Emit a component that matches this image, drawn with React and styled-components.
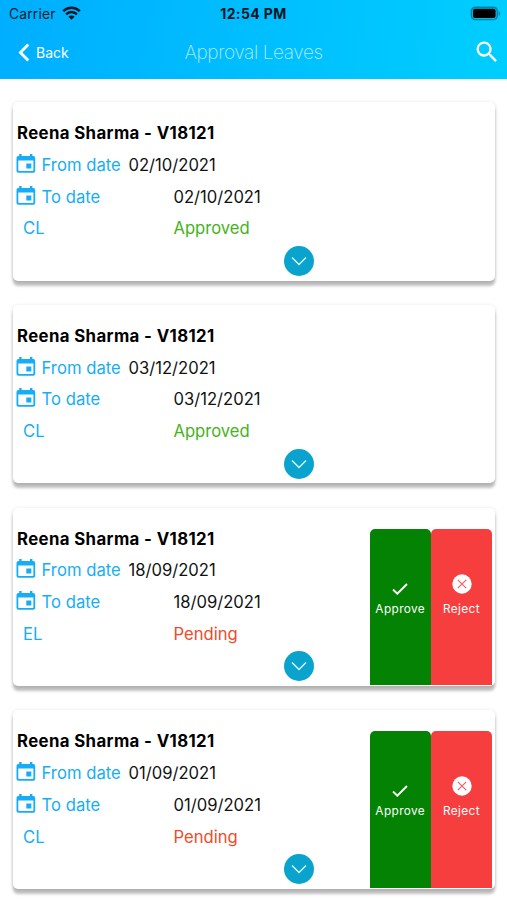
import React from 'react';
import styled, { createGlobalStyle } from 'styled-components';

const GlobalStyle = createGlobalStyle`
    * {
        box-sizing: border-box;
    }
    body {
        margin: 0;
        background: #ffffff;
        font-family: Inter, "Liberation Sans", sans-serif;
    }
`;

const Screen = styled.div`
    width: 507px;
    height: 900px;
    overflow: hidden;
    background: #ffffff;
`;

const Header = styled.header`
    height: 79px;
    background: linear-gradient(100deg, #00aeff 0%, #00ceff 100%);
`;

const StatusBar = styled.div`
    height: 27px;
    padding: 0 6px 0 9px;
    display: grid;
    grid-template-columns: 1fr auto 1fr;
    align-items: center;
    color: #06202c;
    font-size: 13.8px;
`;
const Carrier = styled.div`
    display: flex;
    align-items: center;
    gap: 6px;
    letter-spacing: 0.2px;
    svg {
        margin-top: -1px;
    }
`;
const Time = styled.div`
    color: #04161f;
    font-weight: 700;
    font-size: 14px;
    letter-spacing: 0.4px;
    margin-left: -3px;
`;
const BatterySlot = styled.div`
    display: flex;
    justify-content: flex-end;
`;

const NavBar = styled.nav`
    height: 50px;
    padding: 0 6px 0 18px;
    display: grid;
    grid-template-columns: 1fr auto 1fr;
    align-items: center;
    color: #ffffff;
`;
const BackButton = styled.div`
    display: flex;
    align-items: center;
    gap: 6px;
    font-size: 14px;
`;
const Title = styled.h1`
    margin: 0 0 0 -12px;
    color: rgba(255, 255, 255, 0.7);
    font-size: 19px;
    font-weight: 200;
    letter-spacing: -0.4px;
`;
const SearchButton = styled.div`
    display: flex;
    justify-content: flex-end;
`;

const List = styled.main`
    padding: 23px 12px 0 13px;
    display: grid;
    grid-gap: 24.3px;
`;

const Card = styled.section`
    height: 178.5px;
    padding: 15px 3px 0 4px;
    display: flex;
    justify-content: space-between;
    border-radius: 5px;
    background: #ffffff;
    box-shadow: 0 5px 3px rgba(0, 0, 0, 0.24), 0 1px 4px rgba(0, 0, 0, 0.15);
`;
const Details = styled.div`
    width: 298px;
`;
const Name = styled.h2`
    margin: 0;
    height: 32px;
    line-height: 32px;
    color: #000000;
    font-size: 16.8px;
    font-weight: 700;
    letter-spacing: 0.38px;
    white-space: nowrap;
`;
const Row = styled.div`
    height: 31.8px;
    display: grid;
    grid-template-columns: 24.5px ${props => props.valueColumn}px auto;
    align-items: center;
    font-size: 16.6px;
    white-space: nowrap;
`;
const TypeRow = styled(Row)`
    grid-template-columns: 6px 150.5px auto;
`;
const IconSlot = styled.span`
    display: flex;
    margin: -3px 0 0 -1px;
`;
const Label = styled.span`
    color: #16adf7;
    letter-spacing: 0.05px;
`;
const Value = styled.span`
    color: #111111;
`;
const Status = styled.span`
    color: ${props => (props.$pending ? '#f04a2a' : '#45b320')};
`;
const Toggle = styled.div`
    width: 30px;
    height: 30px;
    margin: 1.5px 0 0 267px;
    display: flex;
    align-items: center;
    justify-content: center;
    border-radius: 50%;
    background: #09a3cd;
`;

const Actions = styled.div`
    margin-top: 6px;
    height: 156.5px;
    display: grid;
    grid-template-columns: 61.5px 61px;
`;
const Action = styled.div`
    padding-top: 44px;
    display: flex;
    flex-direction: column;
    align-items: center;
    border-radius: 5px 5px 0 0;
    background: ${props => props.color};
    color: #ffffff;
    font-size: 11.8px;
    letter-spacing: 0.4px;
`;
const ActionIcon = styled.div`
    height: 22px;
    margin-bottom: 7px;
    padding-top: ${props => props.$drop || 0}px;
    display: flex;
    align-items: center;
`;

const WifiIcon = () => (
  <svg width="19" height="14" viewBox="0 0 19 14" fill="none" stroke="#04161f">
    <path d="M1.2 5.1a11.8 11.8 0 0 1 16.6 0" strokeWidth="2.6" />
    <path d="M4.1 8.3a7.5 7.5 0 0 1 10.8 0" strokeWidth="2.5" />
    <path d="M6.4 10.700a4.400 4.400 0 0 1 6.200 0L9.500 13.800z" fill="#04161f" stroke="none" />
  </svg>
);

const BatteryIcon = () => (
  <svg width="31" height="15" viewBox="0 0 31 15">
    <rect x="1.5" y="1.3" width="25.8" height="12.2" rx="3.8" fill="none" stroke="#0684a8" strokeWidth="1.7" />
    <rect x="3" y="2.8" width="22.6" height="9.2" rx="2" fill="#000000" />
    <path d="M28.700 5.200v4.400c.9-.4 1.500-1.200 1.500-2.200s-.6-1.800-1.500-2.200z" fill="#0684a8" />
  </svg>
);

const BackIcon = () => (
  <svg width="12" height="19" viewBox="0 0 12 19" fill="none" stroke="#ffffff" strokeWidth="2.8">
    <path d="M10.300 1.400L2.400 9.500l7.900 8.100" />
  </svg>
);

const SearchIcon = () => (
  <svg width="28" height="28" viewBox="0 0 24 24" fill="#ffffff">
    <path d="M15.500 14h-.79l-.28-.27A6.471 6.471 0 0 0 16 9.500 6.500 6.500 0 1 0 9.500 16c1.610 0 3.090-.59 4.230-1.570l.27.28v.79l5 4.990L20.490 19l-4.990-5zm-6 0C7.010 14 5 11.990 5 9.500S7.010 5 9.500 5 14 7.010 14 9.500 11.990 14 9.500 14z" />
  </svg>
);

const CalendarIcon = () => (
  <svg width="20" height="19" viewBox="0 0 20 19">
    <path d="M3.200 0h2.400v2H14V0h2.400v2h.8a2 2 0 0 1 2 2v12.700a2 2 0 0 1-2 2H2.500a2 2 0 0 1-2-2V4a2 2 0 0 1 2-2h.7z" fill="#16adf7" />
    <path d="M2.300 6.600h15.100v9.600a.8.8 0 0 1-.8.800H3.100a.8.8 0 0 1-.8-.8z" fill="#ffffff" />
    <rect x="10.300" y="9.500" width="5" height="5" fill="#16adf7" />
  </svg>
);

const ChevronIcon = () => (
  <svg width="16" height="10" viewBox="0 0 16 10" fill="none" stroke="#d9f6ff" strokeWidth="1.400">
    <path d="M1 1.500l7 7 7-7" />
  </svg>
);

const CheckIcon = () => (
  <svg width="16" height="12" viewBox="0 0 16 12" fill="none" stroke="#ffffff" strokeWidth="1.900">
    <path d="M1 6.500l4.300 4.200L15 1" />
  </svg>
);

const RejectIcon = () => (
  <svg width="20" height="20" viewBox="0 0 20 20">
    <circle cx="10" cy="10" r="9.700" fill="#ffffff" />
    <path d="M5.800 5.800l8.400 8.400M14.200 5.800l-8.400 8.400" stroke="#f06066" strokeWidth="1.200" />
  </svg>
);

const leaves = [
  { id: 1, date: '02/10/2021', type: 'CL', status: 'Approved' },
  { id: 2, date: '03/12/2021', type: 'CL', status: 'Approved' },
  { id: 3, date: '18/09/2021', type: 'EL', status: 'Pending' },
  { id: 4, date: '01/09/2021', type: 'CL', status: 'Pending' },
];

const LeaveCard = ({ leave }) => {
  const pending = leave.status === 'Pending';
  return (
    <Card>
      <Details>
        <Name>Reena Sharma - V18121</Name>
        <Row valueColumn={87}>
          <IconSlot><CalendarIcon /></IconSlot>
          <Label>From date</Label>
          <Value>{leave.date}</Value>
        </Row>
        <Row valueColumn={132}>
          <IconSlot><CalendarIcon /></IconSlot>
          <Label>To date</Label>
          <Value>{leave.date}</Value>
        </Row>
        <TypeRow>
          <span />
          <Label>{leave.type}</Label>
          <Status $pending={pending}>{leave.status}</Status>
        </TypeRow>
        <Toggle><ChevronIcon /></Toggle>
      </Details>
      {pending && (
        <Actions>
          <Action color="#048204">
            <ActionIcon $drop={10}><CheckIcon /></ActionIcon>
            Approve
          </Action>
          <Action color="#f73e3f">
            <ActionIcon><RejectIcon /></ActionIcon>
            Reject
          </Action>
        </Actions>
      )}
    </Card>
  );
};

const App = () => (
  <Screen>
    <GlobalStyle />
    <Header>
      <StatusBar>
        <Carrier>Carrier <WifiIcon /></Carrier>
        <Time>12:54 PM</Time>
        <BatterySlot><BatteryIcon /></BatterySlot>
      </StatusBar>
      <NavBar>
        <BackButton><BackIcon />Back</BackButton>
        <Title>Approval Leaves</Title>
        <SearchButton><SearchIcon /></SearchButton>
      </NavBar>
    </Header>
    <List>
      {leaves.map(leave => <LeaveCard key={leave.id} leave={leave} />)}
    </List>
  </Screen>
);
export default App;
